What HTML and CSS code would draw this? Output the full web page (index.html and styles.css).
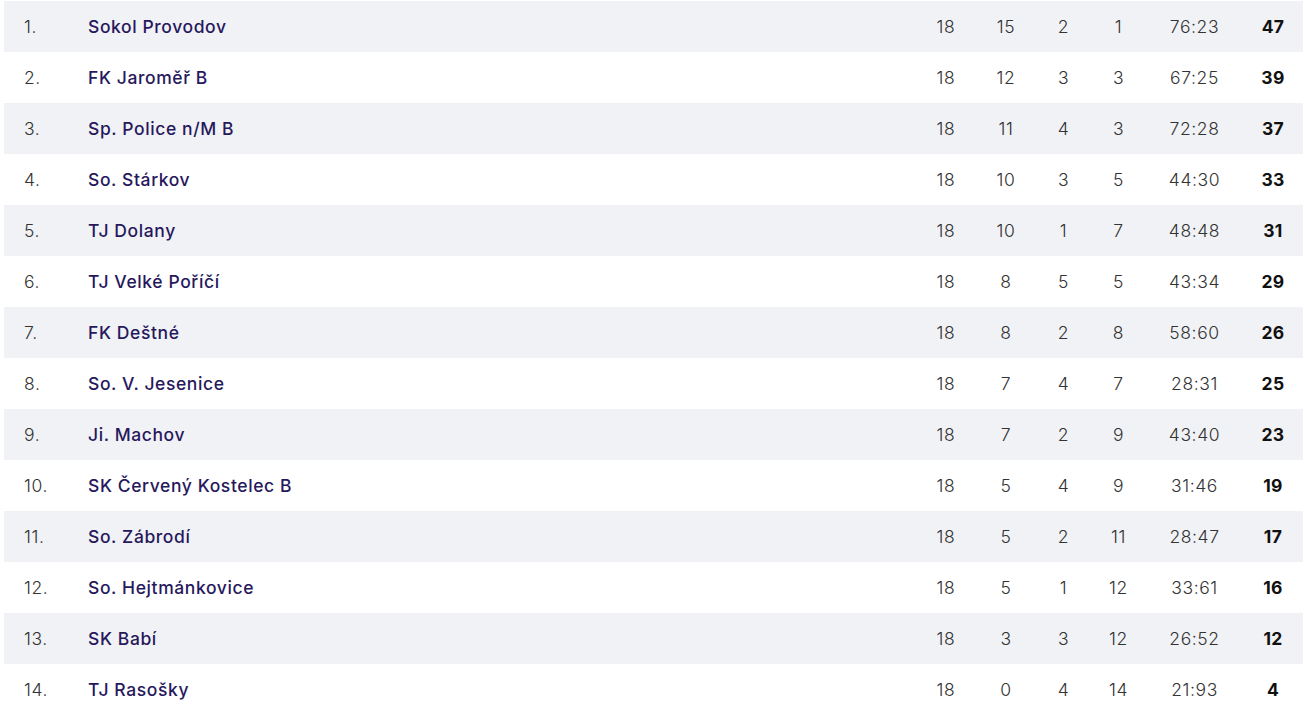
FILE: index.html
```html
<!DOCTYPE html>
<html lang="cs">
<head>
    <meta charset="UTF-8">
    <title>Tabulka</title>
    <link rel="stylesheet" href="styles.css">
</head>
<body>

    <div class="standings">
        <table class="table">
            <colgroup>
                <col class="c-rank">
                <col class="c-team">
                <col class="c-num">
                <col class="c-num">
                <col class="c-sm">
                <col class="c-sm">
                <col class="c-score">
                <col class="c-pts">
            </colgroup>
            <tbody id="rows"></tbody>
        </table>
    </div>

<script>
    const teams = [
        ['Sokol Provodov', 18, 15, 2, 1, '76:23', 47],
        ['FK Jaroměř B', 18, 12, 3, 3, '67:25', 39],
        ['Sp. Police n/M B', 18, 11, 4, 3, '72:28', 37],
        ['So. Stárkov', 18, 10, 3, 5, '44:30', 33],
        ['TJ Dolany', 18, 10, 1, 7, '48:48', 31],
        ['TJ Velké Poříčí', 18, 8, 5, 5, '43:34', 29],
        ['FK Deštné', 18, 8, 2, 8, '58:60', 26],
        ['So. V. Jesenice', 18, 7, 4, 7, '28:31', 25],
        ['Ji. Machov', 18, 7, 2, 9, '43:40', 23],
        ['SK Červený Kostelec B', 18, 5, 4, 9, '31:46', 19],
        ['So. Zábrodí', 18, 5, 2, 11, '28:47', 17],
        ['So. Hejtmánkovice', 18, 5, 1, 12, '33:61', 16],
        ['SK Babí', 18, 3, 3, 12, '26:52', 12],
        ['TJ Rasošky', 18, 0, 4, 14, '21:93', 4]
    ];

    const body = document.getElementById('rows');
    teams.forEach((t, i) => {
        const tr = document.createElement('tr');
        tr.innerHTML = `<td class="rank">${i + 1}.</td>
                        <td class="team">${t[0]}</td>
                        <td>${t[1]}</td>
                        <td>${t[2]}</td>
                        <td>${t[3]}</td>
                        <td>${t[4]}</td>
                        <td>${t[5]}</td>
                        <td class="pts">${t[6]}</td>`;
        body.appendChild(tr);
    });
</script>

</body>
</html>
```

FILE: styles.css
```css
body {
    margin: 0;
    background: #fff;
    font-family: Inter, "Liberation Sans", sans-serif;
}
.standings { padding: 1px 3px 0 4px; }
.table {
    width: 100%;
    border-collapse: collapse;
    table-layout: fixed;
}
.c-rank { width: 84px; }
.c-num { width: 60px; }
.c-sm { width: 55px; }
.c-score { width: 97px; }
.c-pts { width: 60px; }

.table td {
    height: 51px;
    padding: 0;
    font-size: 17.5px;
    letter-spacing: 0.6px;
    color: #333;
    text-align: center;
    font-weight: 300;
}
.table tr:nth-child(odd) td { background: #f1f2f6; }
.table td.rank {
    text-align: left;
    padding-left: 20px;
}
.table td.team {
    text-align: left;
    color: #27185c;
    font-weight: 500;
    letter-spacing: 0.6px;
}
.table td.pts {
    font-weight: 700;
    color: #111;
    letter-spacing: 0.3px;
}
```
